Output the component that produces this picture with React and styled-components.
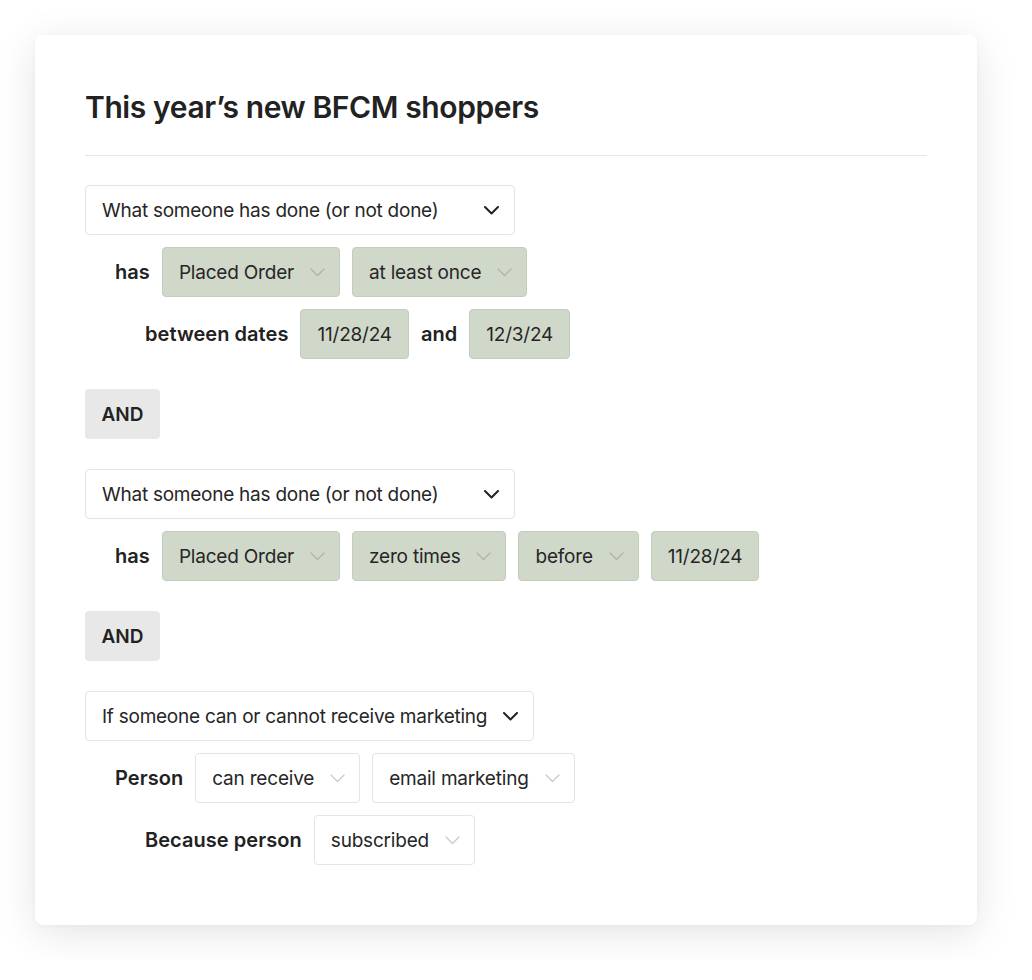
import React from 'react'
import styled, { createGlobalStyle } from 'styled-components'

const GlobalStyle = createGlobalStyle`
  * { box-sizing: border-box; }
  body {
    margin: 0;
    background: #ffffff;
    font-family: Inter, "Noto Sans", "Liberation Sans", sans-serif;
    color: #232323;
  }
`

const Page = styled.div`
  padding: 35px;
`

const Card = styled.div`
  width: 942px;
  min-height: 890px;
  background: #ffffff;
  border-radius: 8px;
  box-shadow: 0 8px 40px rgba(0, 0, 0, 0.11), 0 1px 4px rgba(0, 0, 0, 0.03);
  padding: 52px 50px 60px;
`

const Title = styled.h2`
  margin: 0;
  font-size: 30px;
  line-height: 40px;
  font-weight: 600;
  letter-spacing: -0.4px;
  color: #222222;
`

const Divider = styled.div`
  height: 1px;
  background: #e6e6e6;
  margin: 28px 0 29px;
`

const Filters = styled.div`
  display: flex;
  flex-direction: column;
  align-items: flex-start;
  gap: 30px;
`

const Group = styled.div`
  display: flex;
  flex-direction: column;
  align-items: flex-start;
  gap: 12px;
`

const Row = styled.div`
  display: flex;
  align-items: center;
  gap: 12px;
  padding-left: ${p => p.$indent}px;
`

const Label = styled.span`
  font-size: 20px;
  font-weight: 600;
  color: #222222;
  letter-spacing: 0.05px;
`

const Field = styled.div`
  height: 50px;
  display: inline-flex;
  align-items: center;
  gap: 16px;
  padding: 0 ${p => (p.$noArrow ? 16 : 14)}px 0 16px;
  border-radius: 4px;
  font-size: 19px;
  letter-spacing: -0.2px;
  color: #262626;
  background: ${p => (p.$tone === 'green' ? '#d0d8ca' : '#ffffff')};
  border: 1px solid ${p => (p.$tone === 'green' ? '#c4ccbd' : '#e4e4e4')};
`

const Dropdown = styled.div`
  height: 50px;
  min-width: 430px;
  display: inline-flex;
  align-items: center;
  justify-content: space-between;
  gap: 16px;
  padding: 0 15px 0 16px;
  border: 1px solid #e4e4e4;
  border-radius: 4px;
  font-size: 19px;
  letter-spacing: -0.25px;
  color: #262626;
  background: #ffffff;
`

const AndButton = styled.div`
  width: 75px;
  height: 50px;
  display: flex;
  align-items: center;
  justify-content: center;
  background: #e8e8e8;
  border-radius: 4px;
  font-size: 19px;
  font-weight: 600;
  color: #222222;
`

const Chevron = () => (
  <svg width="15" height="9" viewBox="0 0 15 9" fill="none">
    <path
      d="M1 1l6.5 6.5L14 1"
      stroke="#222222"
      strokeWidth="2"
      strokeLinecap="round"
      strokeLinejoin="round"
    />
  </svg>
)

const LightChevron = ({ tone }) => (
  <svg width="15" height="9" viewBox="0 0 15 9" fill="none">
    <path
      d="M1 1l6.5 6.5L14 1"
      stroke={tone === 'green' ? '#adb4a8' : '#c8c8c8'}
      strokeWidth="1.2"
      strokeLinecap="round"
      strokeLinejoin="round"
    />
  </svg>
)

const Select = ({ tone = 'green', arrow = true, children }) => (
  <Field $tone={tone} $noArrow={!arrow}>
    <span>{children}</span>
    {arrow && <LightChevron tone={tone} />}
  </Field>
)

const Condition = ({ children }) => (
  <Dropdown>
    <span>{children}</span>
    <Chevron />
  </Dropdown>
)

export default function App() {
  return (
    <Page>
      <GlobalStyle />
      <Card>
        <Title>This year’s new BFCM shoppers</Title>
        <Divider />
        <Filters>
          <Group>
            <Condition>What someone has done (or not done)</Condition>
            <Row $indent={30}>
              <Label>has</Label>
              <Select>Placed Order</Select>
              <Select>at least once</Select>
            </Row>
            <Row $indent={60}>
              <Label>between dates</Label>
              <Select arrow={false}>11/28/24</Select>
              <Label>and</Label>
              <Select arrow={false}>12/3/24</Select>
            </Row>
          </Group>

          <AndButton>AND</AndButton>

          <Group>
            <Condition>What someone has done (or not done)</Condition>
            <Row $indent={30}>
              <Label>has</Label>
              <Select>Placed Order</Select>
              <Select>zero times</Select>
              <Select>before</Select>
              <Select arrow={false}>11/28/24</Select>
            </Row>
          </Group>

          <AndButton>AND</AndButton>

          <Group>
            <Condition>If someone can or cannot receive marketing</Condition>
            <Row $indent={30}>
              <Label>Person</Label>
              <Select tone="white">can receive</Select>
              <Select tone="white">email marketing</Select>
            </Row>
            <Row $indent={60}>
              <Label>Because person</Label>
              <Select tone="white">subscribed</Select>
            </Row>
          </Group>
        </Filters>
      </Card>
    </Page>
  )
}
